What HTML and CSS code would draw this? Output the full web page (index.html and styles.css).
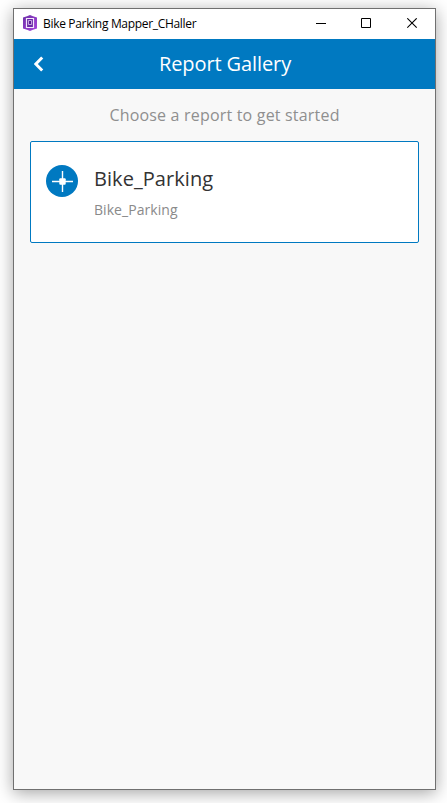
FILE: index.html
```html
<!DOCTYPE html>
<html lang="en">
<head>
<meta charset="utf-8">
<title>Bike Parking Mapper_CHaller</title>
<link rel="stylesheet" href="styles.css">
</head>
<body>
<div class="window">
  <div class="titlebar">
    <svg class="app-icon" width="14" height="16" viewBox="0 0 14 16">
      <defs><linearGradient id="purple" x1="0" y1="0" x2="1" y2="1"><stop offset="0" stop-color="#6c2fa8"/><stop offset="1" stop-color="#a645dc"/></linearGradient></defs>
      <path d="M7 0L10 1.300L14 2.500V13.500L10 14.700L7 16L4 14.700L0 13.500V2.500L4 1.300Z" fill="url(#purple)"/>
      <path d="M3.500 3.500H10.500V12.500H3.500Z" fill="#6a2aa6" stroke="#f3e8fa" stroke-width="1.200"/>
      <path d="M5.500 5.500H8.500V9.500H5.500Z" fill="#5a1c96" stroke="#dcc2ef" stroke-width=".8"/>
    </svg>
    <span class="app-name">Bike Parking Mapper_CHaller</span>
    <div class="controls">
      <svg width="11" height="11" viewBox="0 0 11 11"><path d="M0 5.500H10" stroke="#000"/></svg>
      <svg width="11" height="11" viewBox="0 0 11 11"><path d="M.5.5H9.500V9.500H.5Z" fill="none" stroke="#000"/></svg>
      <svg width="11" height="11" viewBox="0 0 11 11"><path d="M.3.3L9.700 9.700M9.700.3L.3 9.700" fill="none" stroke="#000" stroke-width="1.100"/></svg>
    </div>
  </div>
  <header class="header">
    <svg class="back" width="10" height="16" viewBox="0 0 10 16"><path d="M8.200 1.500L1.800 8L8.200 14.500" fill="none" stroke="#fff" stroke-width="3"/></svg>
    <h1 class="heading">Report Gallery</h1>
  </header>
  <main class="content">
    <p class="prompt">Choose a report to get started</p>
    <div class="card">
      <svg class="marker" width="32" height="32" viewBox="0 0 32 32">
        <circle cx="16" cy="16" r="16" fill="#0079c1"/>
        <path d="M6 16.500H27M16.500 6V27" stroke="#fff" stroke-width="1.400"/>
        <rect x="13.300" y="13.300" width="6.400" height="6.400" rx="1" fill="#fff"/>
      </svg>
      <div class="info">
        <h2 class="name">Bike_Parking</h2>
        <p class="detail">Bike_Parking</p>
      </div>
    </div>
  </main>
</div>
</body>
</html>
```
FILE: styles.css
```css
* { box-sizing: border-box; }
body {
  margin: 0;
  height: 803px;
  padding: 8px 11px 13px 13px;
  overflow: hidden;
  background: #fff;
  font-family: "Open Sans", sans-serif;
}
h1, h2, p { margin: 0; font-weight: 400; white-space: nowrap; }
svg { display: block; flex: none; }
.window {
  height: 782px;
  display: flex;
  flex-direction: column;
  border: 1px solid #707070;
  background: #f8f8f8;
  box-shadow: 0 3px 16px rgba(0, 0, 0, .36);
}
.titlebar {
  height: 30px;
  display: flex;
  align-items: center;
  padding: 0 17px 0 9px;
  background: #fff;
}
.app-icon { margin-top: -2px; }
.app-name {
  margin-left: 6px;
  font: 12px/16px "Open Sans", sans-serif;
  letter-spacing: -.32px;
  color: #000;
  white-space: nowrap;
}
.controls { display: flex; gap: 34px; margin: 0 0 1px auto; }
.controls svg:last-child { margin-left: 1px; }
.header {
  height: 50px;
  display: grid;
  grid-template-columns: 61px 1fr 60px;
  align-items: center;
  background: #0079c1;
  color: #fff;
}
.back { margin-left: 20px; }
.heading { font-size: 20px; line-height: 28px; letter-spacing: -.1px; text-align: center; }
.content { padding: 14px 16px; }
.prompt {
  font-size: 16px;
  line-height: 24px;
  letter-spacing: .19px;
  text-align: center;
  color: #8f8f8f;
}
.card {
  height: 102px;
  margin-top: 14px;
  padding: 23px 15px;
  display: flex;
  gap: 16px;
  border: 1px solid #0079c1;
  border-radius: 2px;
  background: #fff;
}
.name { font-size: 20px; line-height: 28px; letter-spacing: .06px; color: #333; }
.detail { margin-top: 7px; font-size: 14px; line-height: 20px; letter-spacing: .06px; color: #8a8a8a; }
```
